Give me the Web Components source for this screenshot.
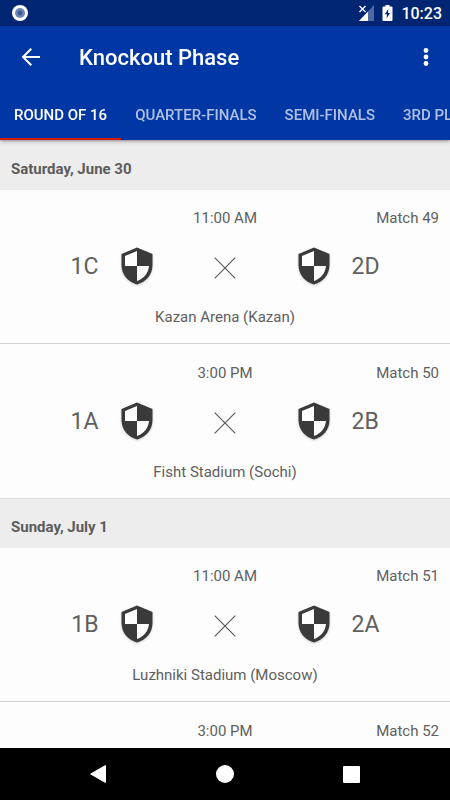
<!DOCTYPE html>
<html lang="en">
<head>
<meta charset="utf-8">
<meta name="viewport" content="width=device-width, initial-scale=1">
<title>Knockout Phase</title>
<style>
html, body { height: 100%; margin: 0; }
body { font-family: Roboto, "Noto Sans", sans-serif; background: #fdfdfd; overflow: hidden; }
</style>
</head>
<body>
<knockout-app></knockout-app>
<script>
const define = (name, html, setup) => customElements.define(name, class extends HTMLElement {
  connectedCallback() {
    if (this.shadowRoot) return;
    const t = document.createElement('template');
    t.innerHTML = html;
    this.attachShadow({ mode: 'open' }).append(t.content.cloneNode(true));
    if (setup) setup(this, this.shadowRoot);
  }
});

define('status-bar', `
<style>
:host { display: flex; align-items: center; height: 26px; padding: 0 8px 0 12px; background: #002573; color: #fff; font-size: 16px; line-height: 20px; font-weight: 500; }
svg { display: block; }
time { padding-top: 2px; }
.end { margin-left: auto; display: flex; align-items: center; gap: 8px; }
</style>
<svg width="16" height="16" viewBox="0 0 16 16"><circle cx="8" cy="8" r="8" fill="#fff"/><circle cx="8" cy="8" r="5" fill="#6d84b5"/><circle cx="8" cy="8" r="2.4" fill="#3b5a96"/></svg>
<div class="end">
<svg width="15" height="16" viewBox="0 0 15 16"><path d="M15 0V16H0z" fill="#4f69a4"/><path d="M9 6.500V16H0z" fill="#fff"/><path d="M0 0H8V7L6 9H0z" fill="#002573"/><path d="M.5 1l6 6M6.500 1l-6 6" stroke="#fff" stroke-width="1.300"/></svg>
<svg width="11" height="16" viewBox="0 0 11 16"><path d="M3.500 0h4v1.500h2q1 0 1 1V15q0 1-1 1h-8q-1 0-1-1V2.500q0-1 1-1h2z" fill="#fff"/><path d="M6.300 4L2.800 9.300H5L4.500 13.200 8.200 8H6z" fill="#002573"/></svg>
<time>10:23</time>
</div>`);

define('app-bar', `
<style>
:host { display: flex; align-items: center; height: 62px; padding: 0 16px 0 20px; color: #fff; }
button { border: 0; padding: 0; background: none; color: inherit; display: flex; }
h1 { margin: 0 auto 0 37px; padding-top: 2px; font-size: 22px; line-height: 28px; font-weight: 500; }
</style>
<button aria-label="Back"><svg width="22" height="22" viewBox="0 0 22 22"><path d="M20 11H3M11.300 2.700L3 11l8.300 8.300" fill="none" stroke="#fff" stroke-width="2"/></svg></button>
<h1><slot></slot></h1>
<button aria-label="More options"><svg width="16" height="22" viewBox="0 0 16 22"><g fill="#fff"><circle cx="8" cy="4.500" r="2.400"/><circle cx="8" cy="11" r="2.400"/><circle cx="8" cy="17.500" r="2.400"/></g></svg></button>`);

define('phase-tabs', `
<style>
:host { display: flex; height: 52px; overflow: hidden; }
button { flex: none; border: 0; border-bottom: 2px solid transparent; padding: 3px 14px 0; background: none; color: #b0c0e4; font: 500 15px/20px Roboto, sans-serif; white-space: nowrap; }
button[aria-selected=true] { color: #fff; border-color: #d81a08; }
</style>
<button role="tab" aria-selected="true">ROUND OF 16</button><button role="tab">QUARTER-FINALS</button><button role="tab">SEMI-FINALS</button><button role="tab">3RD PLACE</button>`,
(el) => el.setAttribute('role', 'tablist'));

define('day-header', `
<style>
:host { display: block; box-sizing: border-box; border-top: 1px solid #dedede; padding: 18px 11px 11px; background: #ededed; color: #5c5c5c; }
h2 { margin: 0; font-size: 15px; line-height: 20px; font-weight: 700; }
</style>
<h2><slot></slot></h2>`);

define('team-shield', `
<style>:host { display: block; } svg { display: block; filter: drop-shadow(0 1px 1px #0003); }</style>
<svg width="32" height="38" viewBox="0 0 32 38"><path d="M16 .5L31.500 7V18C31.500 27.500 25 35 16 37.500 7 35 .5 27.500 .5 18V7z" fill="#3a3a3a"/><path d="M16 4V19H4V9z" fill="#fdfdfd"/><path d="M16 19H28C27.300 26 23 31.500 16 34z" fill="#fdfdfd"/></svg>`);

define('match-row', `
<style>
:host { display: block; padding: 18px 11px 16px; color: #606060; font-size: 15px; line-height: 20px; background: #fdfdfd; }
:host([divided]) { border-top: 1px solid #d2d2d2; padding-top: 19px; }
.top { display: grid; grid-template-columns: 1fr auto 1fr; }
.no { text-align: right; }
.teams { display: grid; grid-template-columns: 1fr 32px 145px 32px 1fr; align-items: center; height: 40px; margin: 18px 0 21px; }
.code { font-size: 23px; line-height: 28px; padding: 2px 22px 0; }
.home { text-align: right; }
.x { justify-self: center; margin-top: 4px; display: block; }
.venue { text-align: center; }
</style>
<div class="top"><span></span><time></time><span class="no"></span></div>
<div class="teams"><span class="code home"></span><team-shield></team-shield>
<svg class="x" width="22" height="22" viewBox="0 0 22 22"><path d="M.7 .7l20.600 20.600M21.300 .7L.7 21.300" stroke="#555" stroke-width="1.100"/></svg>
<team-shield></team-shield><span class="code away"></span></div>
<div class="venue"><slot></slot></div>`,
(el, r) => {
  r.querySelector('time').textContent = el.getAttribute('time');
  r.querySelector('.no').textContent = 'Match ' + el.getAttribute('number');
  r.querySelector('.home').textContent = el.getAttribute('home');
  r.querySelector('.away').textContent = el.getAttribute('away');
});

define('system-nav', `
<style>
:host { display: grid; grid-template-columns: 1fr auto 1fr; align-items: center; height: 52px; padding: 0 90px; background: #000; }
button { border: 0; padding: 0; background: none; display: flex; }
button:last-child { justify-self: end; }
</style>
<button aria-label="Back"><svg width="18" height="18" viewBox="0 0 18 18"><path d="M15.500 .5V17.500L.7 9z" fill="#fff" stroke="#fff" stroke-linejoin="round"/></svg></button>
<button aria-label="Home"><svg width="18" height="18" viewBox="0 0 18 18"><circle cx="9" cy="9" r="9" fill="#fff"/></svg></button>
<button aria-label="Recent apps"><svg width="17" height="17" viewBox="0 0 17 17"><rect width="17" height="17" rx="1" fill="#fff"/></svg></button>`);

define('knockout-app', `
<style>
:host { display: flex; flex-direction: column; height: 100vh; }
header { flex: none; position: relative; background: #0037a4; box-shadow: 0 1px 4px #0006; }
main { flex: 1; min-height: 0; overflow-y: auto; scrollbar-width: none; }
system-nav, status-bar { flex: none; }
</style>
<status-bar></status-bar>
<header><app-bar>Knockout Phase</app-bar><phase-tabs></phase-tabs></header>
<main>
<day-header>Saturday, June 30</day-header>
<match-row time="11:00 AM" number="49" home="1C" away="2D">Kazan Arena (Kazan)</match-row>
<match-row divided time="3:00 PM" number="50" home="1A" away="2B">Fisht Stadium (Sochi)</match-row>
<day-header>Sunday, July 1</day-header>
<match-row time="11:00 AM" number="51" home="1B" away="2A">Luzhniki Stadium (Moscow)</match-row>
<match-row divided time="3:00 PM" number="52" home="" away=""></match-row>
</main>
<system-nav></system-nav>`);
</script>
</body>
</html>
